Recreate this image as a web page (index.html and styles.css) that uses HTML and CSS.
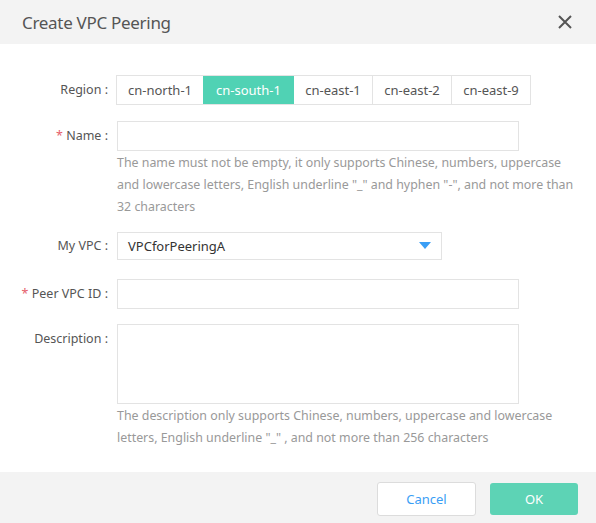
FILE: index.html
```html
<!DOCTYPE html>
<html>
<head>
<meta charset="utf-8">
<link rel="stylesheet" href="styles.css">
</head>
<body>
<div class="dialog">
  <div class="header">
    <div class="title">Create VPC Peering</div>
    <svg class="close" width="14" height="14" viewBox="0 0 14 14"><path d="M1 1 L13 13 M13 1 L1 13" stroke="#555" stroke-width="2" fill="none"/></svg>
  </div>
  <div class="body">
    <div class="row row-region">
      <div class="label">Region :</div>
      <div class="tabs">
        <div class="tab t1">cn-north-1</div>
        <div class="tab t2 active">cn-south-1</div>
        <div class="tab t3">cn-east-1</div>
        <div class="tab t3">cn-east-2</div>
        <div class="tab t3">cn-east-9</div>
      </div>
    </div>
    <div class="row row-name">
      <div class="label"><span class="req">*</span> Name :</div>
      <div class="field">
        <div class="input"></div>
        <div class="help">The name must not be empty, it only supports Chinese, numbers, uppercase<br>and lowercase letters, English underline "_" and hyphen "-", and not more than<br>32 characters</div>
      </div>
    </div>
    <div class="row row-vpc">
      <div class="label">My VPC :</div>
      <div class="select">
        <span class="select-value">VPCforPeeringA</span>
        <svg class="arrow" width="12" height="7" viewBox="0 0 12 7"><path d="M0 0 H12 L6 7 Z" fill="#3a9ef5"/></svg>
      </div>
    </div>
    <div class="row row-peer">
      <div class="label"><span class="req">*</span> Peer VPC ID :</div>
      <div class="input"></div>
    </div>
    <div class="row row-desc">
      <div class="label label-top">Description :</div>
      <div class="field">
        <div class="textarea"></div>
        <div class="help">The description only supports Chinese, numbers, uppercase and lowercase<br>letters, English underline "_" , and not more than 256 characters</div>
      </div>
    </div>
  </div>
  <div class="footer">
    <div class="btn btn-cancel">Cancel</div>
    <div class="btn btn-ok">OK</div>
  </div>
</div>
</body>
</html>
```
FILE: styles.css
```css
html, body {
  margin: 0;
  padding: 0;
  background: #fff;
}
body {
  font-family: "Noto Sans", "Open Sans", sans-serif;
  color: #555;
}
.dialog {
  width: 596px;
  height: 523px;
  display: flex;
  flex-direction: column;
  background: #fff;
}
.header {
  height: 44px;
  background: #f3f3f3;
  display: flex;
  align-items: center;
  justify-content: space-between;
  padding: 0 24px 0 22px;
}
.title {
  font-size: 17px;
  color: #555;
  letter-spacing: -0.3px;
}
.close {
  display: block;
}
.body {
  flex: 1;
  padding-top: 31px;
}
.row {
  display: flex;
  align-items: flex-start;
}
.label {
  width: 117px;
  flex: none;
  text-align: right;
  padding-right: 9px;
  box-sizing: border-box;
  font-size: 12.5px;
  color: #555;
  white-space: nowrap;
}
.req {
  color: #e5606b;
}
.row-region .label { line-height: 30px; width: 116px; padding-right: 8px; }
.tabs {
  display: flex;
  height: 30px;
  border: 1px solid #e3e3e3;
  box-sizing: border-box;
}
.tab {
  display: flex;
  align-items: center;
  justify-content: center;
  font-size: 13px;
  color: #555;
  border-left: 1px solid #e3e3e3;
  box-sizing: border-box;
}
.tab:first-child { border-left: none; }
.t1 { width: 86px; }
.t2 { width: 90px; }
.t3 { width: 79px; }
.tab.active {
  background: #50d2b4;
  color: #fff;
  border-left-color: #50d2b4;
}
.tab.active + .tab { border-left-color: #50d2b4; }
.row-name { margin-top: 16px; }
.row-name .label, .row-peer .label { line-height: 30px; }
.field {
  display: flex;
  flex-direction: column;
}
.input {
  width: 402px;
  height: 30px;
  border: 1px solid #e3e3e3;
  box-sizing: border-box;
}
.help {
  font-size: 12.4px;
  line-height: 22px;
  color: #999;
  white-space: nowrap;
  margin-top: 1px;
}
.row-vpc { margin-top: 14px; }
.row-vpc .label { line-height: 28px; }
.select {
  width: 325px;
  height: 28px;
  border: 1px solid #e3e3e3;
  box-sizing: border-box;
  display: flex;
  align-items: center;
  justify-content: space-between;
  padding: 0 10px 0 10px;
}
.select-value {
  font-size: 13px;
  color: #333;
}
.arrow { display: block; margin-top: -1px; }
.row-peer { margin-top: 19px; }
.row-desc { margin-top: 15px; }
.label-top { line-height: 30px; }
.textarea {
  width: 402px;
  height: 80px;
  border: 1px solid #e3e3e3;
  box-sizing: border-box;
}
.footer {
  height: 51px;
  background: #f3f3f3;
  display: flex;
  justify-content: flex-end;
  align-items: flex-start;
  padding: 10px 18px 0 0;
  box-sizing: border-box;
  gap: 14px;
}
.btn {
  display: flex;
  align-items: center;
  justify-content: center;
  font-size: 13px;
  border-radius: 3px;
  box-sizing: border-box;
}
.btn-cancel {
  width: 99px;
  height: 34px;
  background: #fff;
  border: 1px solid #dcdcdc;
  color: #3a9ef5;
}
.btn-ok {
  width: 88px;
  height: 32px;
  margin-top: 1px;
  background: #5dd3b5;
  color: #fff;
}
```
